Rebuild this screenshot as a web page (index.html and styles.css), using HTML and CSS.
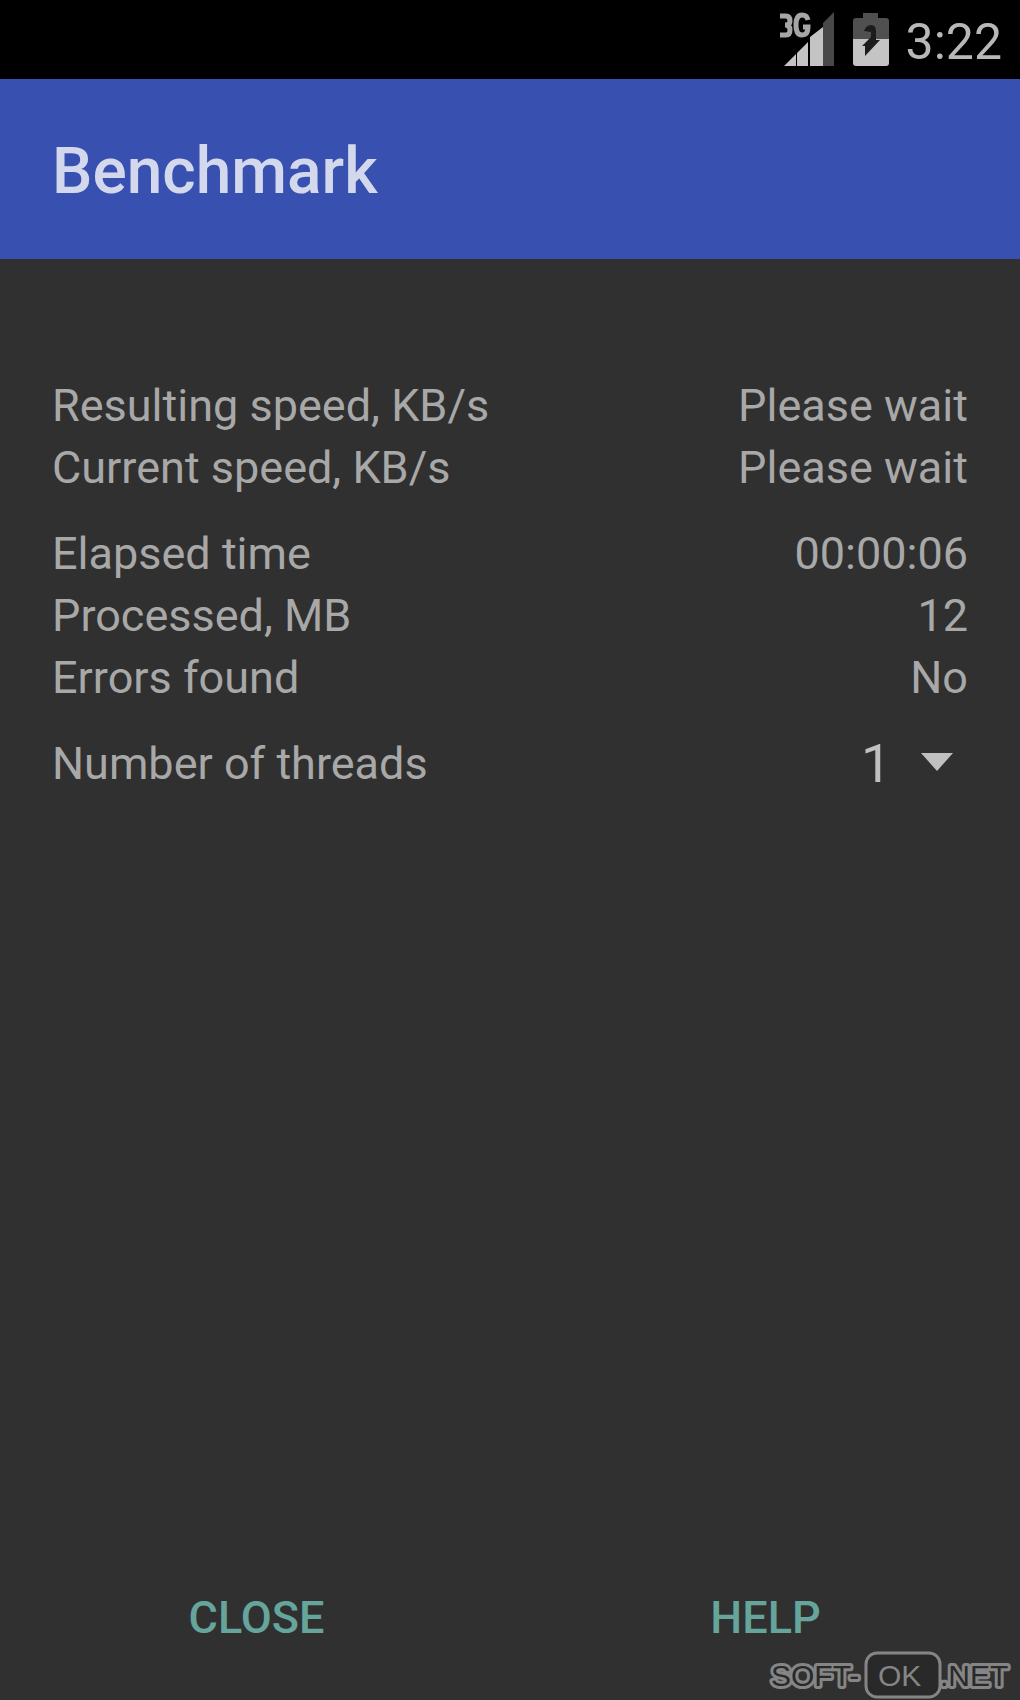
FILE: index.html
```html
<!DOCTYPE html>
<html lang="en">
<head>
<meta charset="UTF-8">
<meta name="viewport" content="width=device-width, initial-scale=1.0">
<title>Benchmark</title>
<link rel="stylesheet" href="styles.css">
</head>
<body>

<div class="status-bar">
  <svg class="signal" viewBox="0 0 56 56" aria-hidden="true">
    <path d="M54 0V54H43V11Z" fill="#484848"/>
    <path d="M4 54L16 42V54ZM17 54V41L28 30V54ZM30 54V25L43 15V54Z" fill="#c4c4c4"/>
    <path d="M0 4H6Q10 4 10 9Q10 13 5 13Q10 13 10 18Q10 23 6 23H0M28 8Q27 3 22 3Q16 3 16 13Q16 23 22 23Q28 23 28 15H23" fill="none" stroke="#a6a6a6" stroke-width="5"/>
  </svg>
  <svg class="battery" viewBox="0 0 38 54" aria-hidden="true">
    <path d="M11 0H26V5H34Q37 5 37 8V27H1V8Q1 5 4 5H11Z" fill="#505050"/>
    <path d="M1 26H37V50Q37 53 34 53H4Q1 53 1 50Z" fill="#c4c4c4"/>
    <path d="M12 18Q14 12 19 12Q24 12 24 18V27H28L13 43V33H10L19 24V19Z" fill="#1c1c1c"/>
  </svg>
  <span class="clock">3:22</span>
</div>

<header class="app-bar">
  <h1>Benchmark</h1>
</header>

<main class="content">
  <table class="results">
    <tbody>
      <tr><th scope="row">Resulting speed, KB/s</th><td>Please wait</td></tr>
      <tr><th scope="row">Current speed, KB/s</th><td>Please wait</td></tr>
    </tbody>
    <tbody>
      <tr><th scope="row">Elapsed time</th><td>00:00:06</td></tr>
      <tr><th scope="row">Processed, MB</th><td>12</td></tr>
      <tr><th scope="row">Errors found</th><td>No</td></tr>
    </tbody>
  </table>
  <div class="threads">
    <label for="threads">Number of threads</label>
    <div class="spinner">
      <select id="threads">
        <option>1</option>
        <option>2</option>
        <option>4</option>
      </select>
      <svg class="arrow" viewBox="0 0 32 18" aria-hidden="true"><path d="M0 0H32L16 18Z"/></svg>
    </div>
  </div>
</main>

<footer class="actions">
  <button type="button">CLOSE</button>
  <button type="button">HELP</button>
</footer>

<svg class="watermark" viewBox="0 0 250 50">
  <text class="outlined" x="1" y="36">SOFT-</text>
  <text class="outlined" x="170" y="36">.NET</text>
  <rect x="96" y="3" width="74" height="44" rx="11"/>
  <text x="108" y="36">OK</text>
</svg>

</body>
</html>
```

FILE: styles.css
```css
* {
  box-sizing: border-box;
}
body {
  margin: 0;
  min-height: 100vh;
  display: flex;
  flex-direction: column;
  position: relative;
  background: #303030;
  color: #a8a8a8;
  font-family: Roboto, sans-serif;
  font-size: 45px;
  line-height: 62px;
}
.status-bar {
  display: flex;
  justify-content: flex-end;
  align-items: center;
  height: 79px;
  padding-right: 18px;
  background: #000;
}
.signal {
  width: 56px;
  height: 56px;
  overflow: visible;
}
.battery {
  width: 38px;
  height: 54px;
  margin: 0 16px;
}
.clock {
  padding-top: 4px;
  color: #b8b8b8;
  font-size: 50px;
}
.app-bar {
  display: flex;
  align-items: center;
  height: 180px;
  padding: 6px 52px 0;
  background: #3850b0;
}
.app-bar h1 {
  margin: 0;
  color: #d3d8ed;
  font-size: 64px;
  font-weight: 500;
}
.content {
  flex: 1;
  padding: 116px 52px 0;
}
.results {
  width: 100%;
  border-collapse: collapse;
}
.results th,
.results td {
  padding: 0;
  font-weight: 400;
  text-align: left;
}
.results td {
  text-align: right;
}
.results tbody + tbody tr:first-child > * {
  padding-top: 24px;
}
.threads {
  display: flex;
  justify-content: space-between;
  margin-top: 24px;
}
.spinner {
  position: relative;
}
.spinner select {
  appearance: none;
  display: block;
  height: 62px;
  padding: 0 76px 0 20px;
  border: 0;
  background: none;
  color: #c0c0c0;
  font: inherit;
  font-size: 54px;
}
.arrow {
  position: absolute;
  top: 20px;
  right: 15px;
  width: 32px;
  height: 18px;
  fill: #c0c0c0;
  pointer-events: none;
}
.actions {
  display: flex;
  padding: 0 0 34px 2px;
}
.actions button {
  flex: 1;
  height: 96px;
  border: 0;
  background: none;
  color: #65a59c;
  font: inherit;
  font-weight: 500;
}
.watermark {
  position: absolute;
  right: 0;
  bottom: 0;
  width: 250px;
  height: 50px;
  overflow: visible;
  fill: #858585;
  font-family: "Liberation Sans", Arial, sans-serif;
  font-size: 30px;
}
.watermark rect {
  fill: #292929;
  stroke: #858585;
  stroke-width: 3px;
}
.outlined {
  fill: #292929;
  stroke: #858585;
  stroke-width: 6px;
  stroke-linejoin: round;
  paint-order: stroke;
}
```
